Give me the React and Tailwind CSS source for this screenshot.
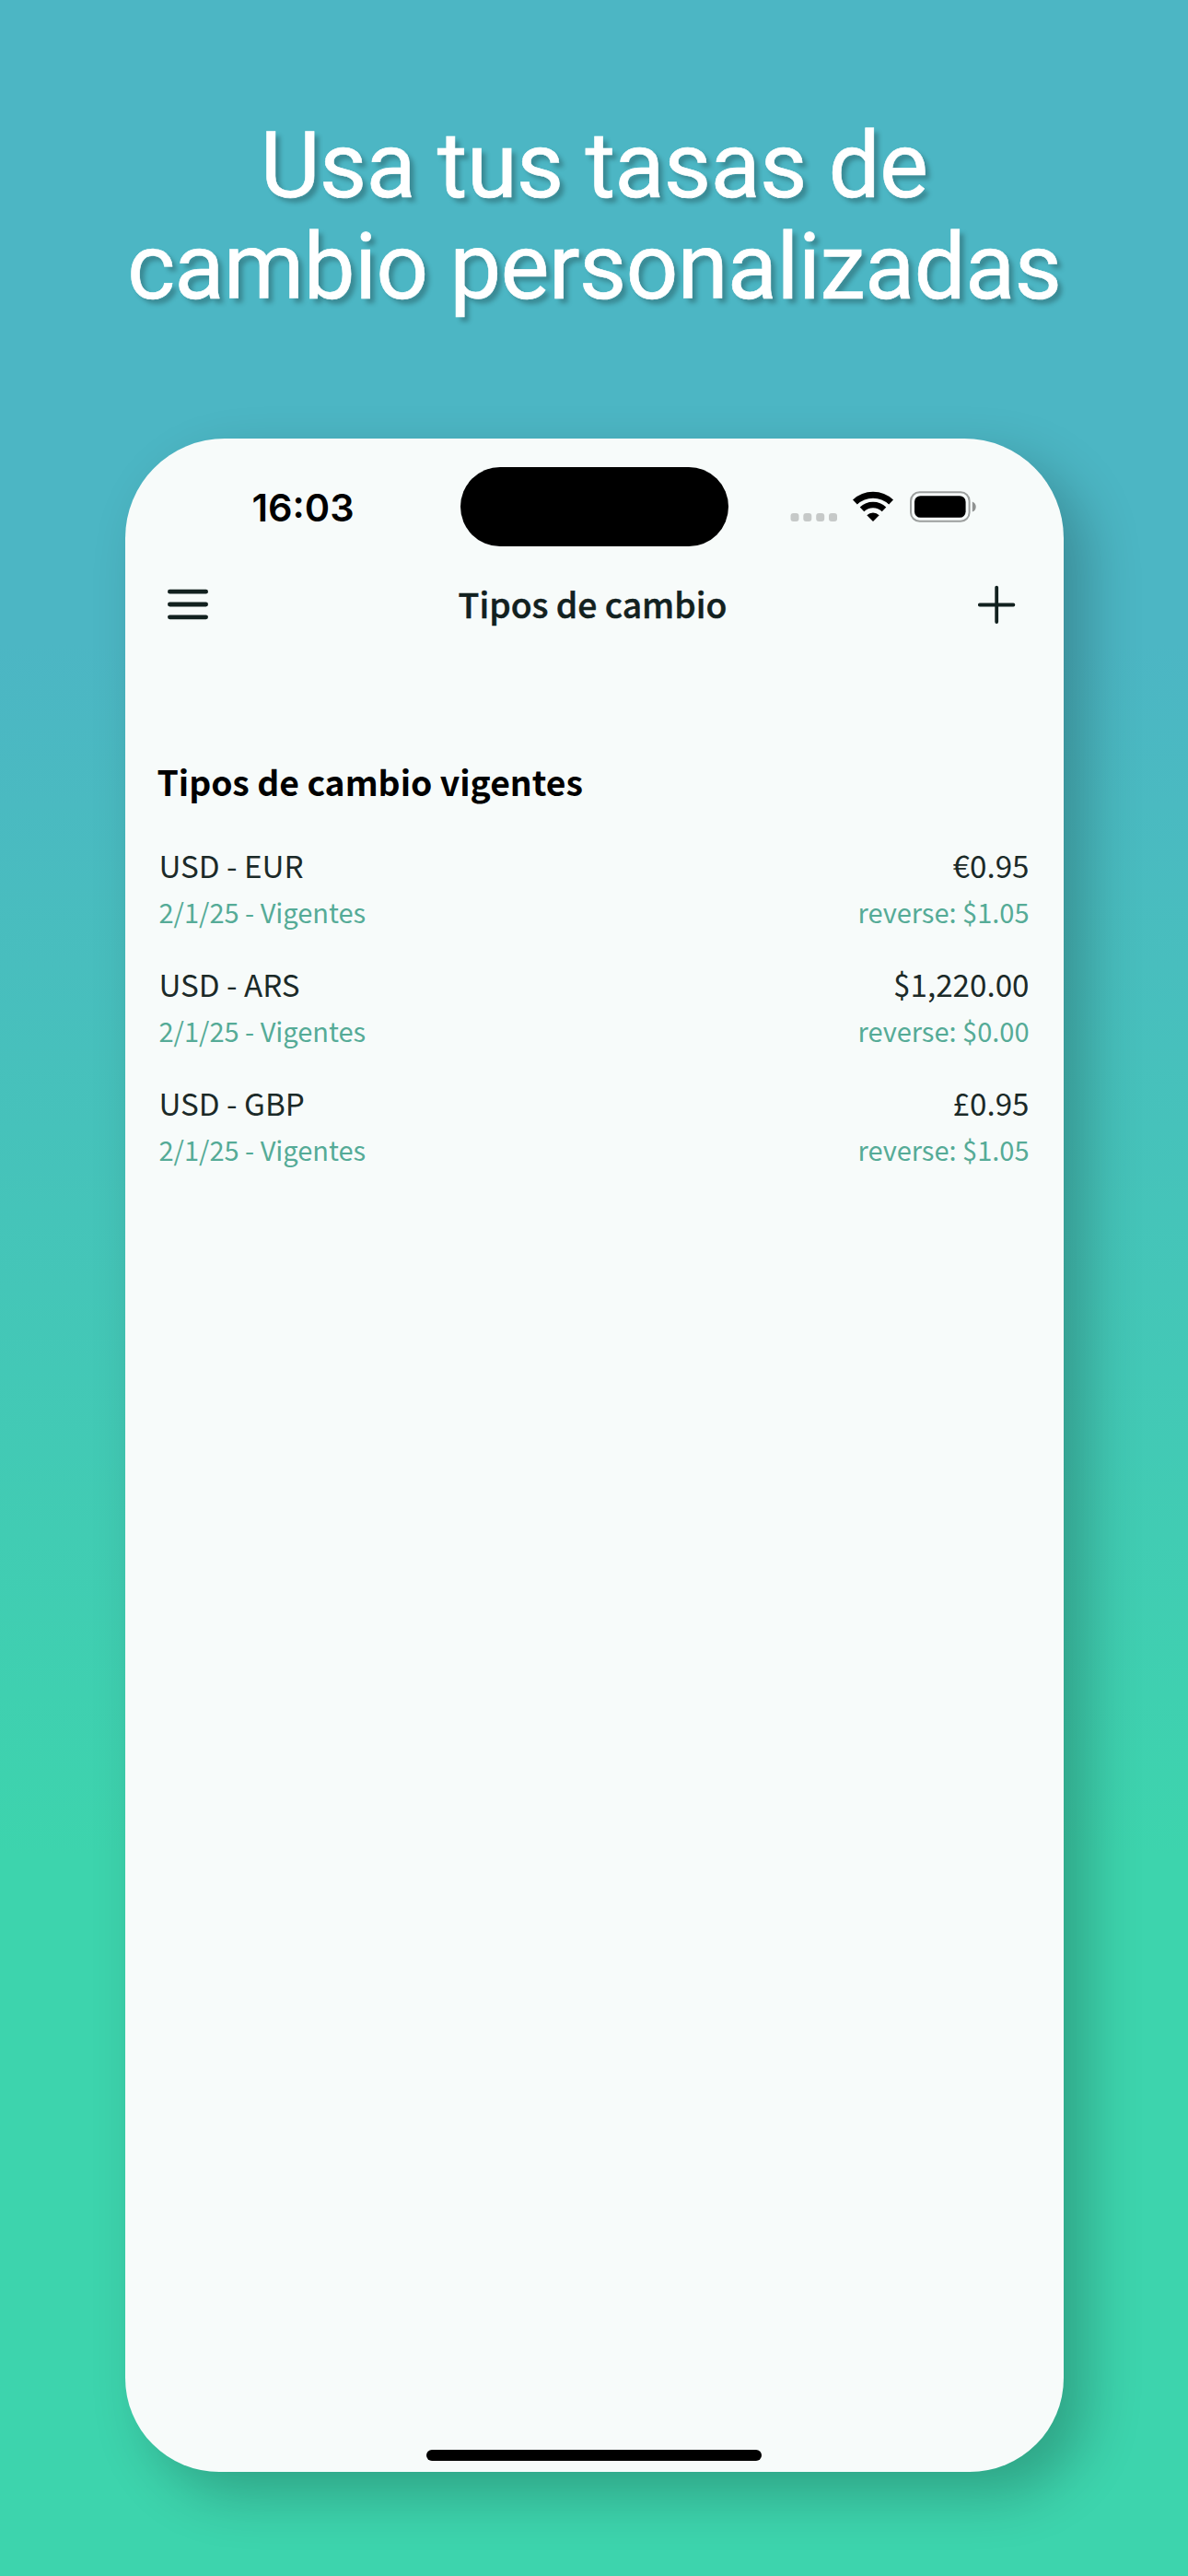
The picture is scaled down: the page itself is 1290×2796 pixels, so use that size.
import React from 'react';

const rates = [
  { pair: 'USD - EUR', since: '2/1/25 - Vigentes', value: '€0.95', reverse: 'reverse: $1.05' },
  { pair: 'USD - ARS', since: '2/1/25 - Vigentes', value: '$1,220.00', reverse: 'reverse: $0.00' },
  { pair: 'USD - GBP', since: '2/1/25 - Vigentes', value: '£0.95', reverse: 'reverse: $1.05' },
];

const SignalDots = () => (
  <svg width="52" height="10" viewBox="0 0 52 10" fill="#c6c9c8">
    <rect x="0.5" y="0" width="9" height="9" rx="3" />
    <rect x="14.3" y="0" width="9" height="9" rx="3" />
    <rect x="28.2" y="0" width="9" height="9" rx="3" />
    <rect x="42" y="0" width="9" height="9" rx="3" />
  </svg>
);

const WifiIcon = () => (
  <svg width="44" height="34" viewBox="0 0 44 34" fill="none" stroke="#000">
    <path d="M2.4 12 A28.5 28.5 0 0 1 41.6 12" strokeWidth="7" />
    <path d="M10 19.8 A17.5 17.5 0 0 1 34 19.8" strokeWidth="6.6" />
    <path d="M15.3 26.2 A9.6 9.6 0 0 1 28.7 26.2 L22 33 Z" fill="#000" stroke="none" />
  </svg>
);

const BatteryIcon = () => (
  <svg width="73" height="35" viewBox="0 0 73 35">
    <rect x="1" y="1.2" width="63.6" height="31.6" rx="9.5" fill="none" stroke="#9c9f9e" strokeWidth="2" />
    <rect x="5" y="5.2" width="55.6" height="23.6" rx="6.5" fill="#000" />
    <path d="M67.8 11.4 C73 13.2 73 20.8 67.8 22.6 Z" fill="#8f9291" />
  </svg>
);

const MenuIcon = () => (
  <svg width="46" height="34" viewBox="0 0 46 34" stroke="#12211f" strokeWidth="4.8" strokeLinecap="round">
    <path d="M3.4 3.2 H42.6 M3.4 17 H42.6 M3.4 30.8 H42.6" />
  </svg>
);

const PlusIcon = () => (
  <svg width="42" height="42" viewBox="0 0 42 42" stroke="#12211f" strokeWidth="3.8" strokeLinecap="round">
    <path d="M2.8 21.5 H39.4 M21.2 2.6 V40" />
  </svg>
);

const StatusBar = () => (
  <div className="h-[138px] pt-[31px] flex">
    <div className="w-[364px] h-[86px] pl-[138px] pt-[2px] flex items-center font-['Inter',sans-serif] text-[41.5px] font-semibold text-black">
      16:03
    </div>
    <div className="w-[291px] h-[86px] rounded-full bg-black" />
    <div className="h-[86px] ml-[67px] pt-[26px] flex items-start">
      <div className="pt-[24px]"><SignalDots /></div>
      <div className="ml-[16.5px]"><WifiIcon /></div>
      <div className="ml-[18px]"><BatteryIcon /></div>
    </div>
  </div>
);

const RateRow = ({ rate }) => (
  <li className="h-[129px] flex justify-between">
    <div>
      <p className="text-[33.2px] leading-[48px] text-[#1b2a28]">{rate.pair}</p>
      <p className="text-[29px] leading-[53px] text-[#55ab97]">{rate.since}</p>
    </div>
    <div className="text-right">
      <p className="text-[33.2px] leading-[48px] text-[#1b2a28]">{rate.value}</p>
      <p className="text-[29px] leading-[53px] text-[#55ab97]">{rate.reverse}</p>
    </div>
  </li>
);

export default function App() {
  return (
    <div className="w-[1290px] h-[2796px] overflow-hidden flex flex-col items-center bg-[linear-gradient(180deg,#4cb6c4_0%,#4cb6c4_25%,#3dd4ad_72%,#3dd4ad_100%)]">
      <h1 className="h-[476px] pt-[125px] text-center text-white font-['Roboto',sans-serif] text-[100px] leading-[110px] tracking-[-0.9px] [-webkit-text-stroke:0.6px_white] [text-shadow:5px_5px_5px_rgba(0,0,0,0.25)]">
        Usa tus tasas de
        <br />
        cambio personalizadas
      </h1>

      <div className="w-[1019px] h-[2207px] shrink-0 overflow-hidden rounded-t-[108px] rounded-b-[102px] bg-[#f7fbfa] shadow-[25px_25px_60px_rgba(0,0,0,0.23)] font-['Noto_Sans_CJK_SC',sans-serif] flex flex-col">
        <StatusBar />

        <header className="h-[84px] pl-[45px] pr-[52px] flex items-center justify-between">
          <MenuIcon />
          <p className="pb-0.5 text-[37.3px] leading-[56px] font-medium text-[#12211f] [-webkit-text-stroke:0.5px_#12211f]">Tipos de cambio</p>
          <PlusIcon />
        </header>

        <main className="flex-1 px-[37px] pt-[122px]">
          <h2 className="-ml-[2px] text-[37.3px] leading-[56px] font-bold text-black">Tipos de cambio vigentes</h2>
          <ul className="mt-[39px]">
            {rates.map((rate) => (
              <RateRow key={rate.pair} rate={rate} />
            ))}
          </ul>
        </main>

        {/* home indicator */}
        <div className="mx-auto mb-[12px] w-[364px] h-[12px] rounded-full bg-black" />
      </div>
    </div>
  );
}
